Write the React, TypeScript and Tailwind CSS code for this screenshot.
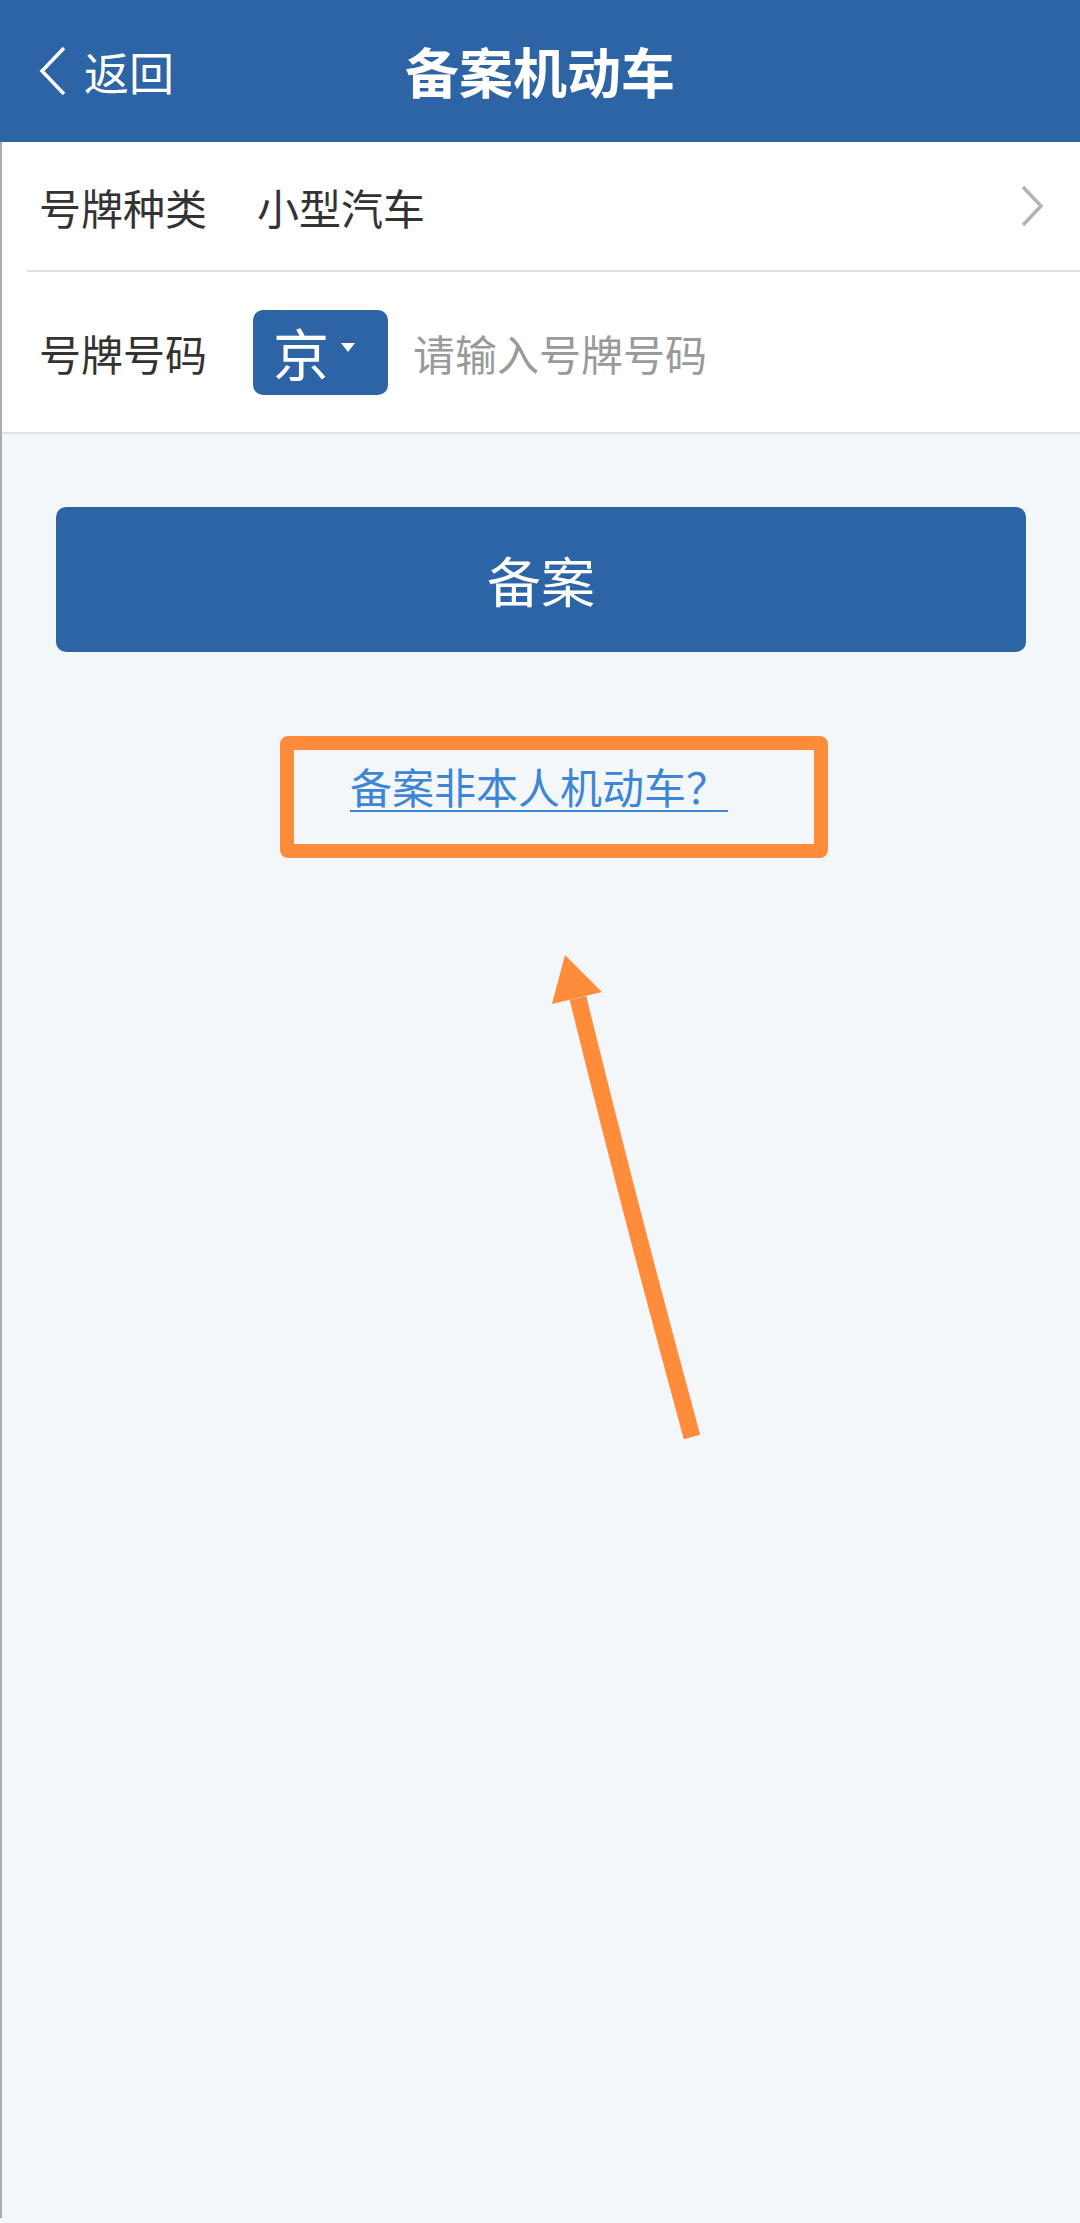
export default function App() {
  return (
    <div
      className="relative min-h-[2223px] w-[1080px] bg-[#f4f7f9]"
      style={{ fontFamily: '"Noto Sans CJK SC", "Noto Sans", sans-serif' }}
    >
      {/* header */}
      <div className="grid h-[142px] grid-cols-[1fr_auto_1fr] items-center bg-[#2c64a6] text-white">
        <div className="flex items-center pl-[38px]">
          <svg width="30" height="52" viewBox="0 0 30 52" fill="none">
            <path d="M26 3 L4 26 L26 49" stroke="white" strokeWidth="3.5" strokeLinejoin="miter" />
          </svg>
          <span className="ml-[16px] text-[45px] leading-none">返回</span>
        </div>
        <h1 className="text-[54px] font-bold leading-none">备案机动车</h1>
        <div />
      </div>

      <div className="border-l-2 border-[#a9adb1]">
        {/* form */}
        <div className="border-b-2 border-[#e1e3e5] bg-white">
          <div className="ml-[25px] flex h-[130px] items-center border-b-2 border-[#dcdee0] pr-[36px]">
            <span className="w-[230px] pl-[12px] text-[42px] text-[#333]">号牌种类</span>
            <span className="flex-1 text-[42px] text-[#333]">小型汽车</span>
            <svg width="24" height="42" viewBox="0 0 24 42" fill="none">
              <path d="M3 2 L21 21 L3 40" stroke="#b3b3b3" strokeWidth="3.5" />
            </svg>
          </div>
          <div className="flex h-[160px] items-center pl-[37px]">
            <span className="w-[214px] text-[42px] text-[#333]">号牌号码</span>
            <button className="flex h-[85px] w-[135px] items-center rounded-[10px] bg-[#2c64a6] pl-[20px] text-white">
              <span className="text-[56px] leading-none">京</span>
              <svg className="ml-[12px] -mt-[10px]" width="14" height="9" viewBox="0 0 14 9">
                <path d="M0 0 H14 L7 9 Z" fill="white" />
              </svg>
            </button>
            <span className="ml-[25px] text-[42px] text-[#9a9a9a]">请输入号牌号码</span>
          </div>
        </div>

        {/* submit */}
        <div className="px-[54px] pt-[73px]">
          <button className="flex h-[145px] w-full items-center justify-center rounded-[10px] bg-[#2c64a6] text-[54px] text-white">
            备案
          </button>
        </div>

        {/* link */}
        <div className="flex justify-center pt-[84px] pl-[26px]">
          <div className="rounded-[8px] border-[14px] border-[#fe8c3b] pl-[56px] pr-[86px] pt-[9px] pb-[31px]">
            <a className="text-[42px] leading-[54px] text-[#3d86d6] underline decoration-2 underline-offset-[6px]">
              备案非本人机动车？
            </a>
          </div>
        </div>

        <div className="h-[1360px]" />
      </div>

      {/* annotation arrow */}
      <svg className="absolute left-0 top-0" width="1080" height="2223" viewBox="0 0 1080 2223" fill="none">
        <path d="M692 1437 Q630 1210 578 998" stroke="#fe8c3b" strokeWidth="17" />
        <path d="M565 955 L552 1004 L602 992 Z" fill="#fe8c3b" />
      </svg>
    </div>
  );
}
